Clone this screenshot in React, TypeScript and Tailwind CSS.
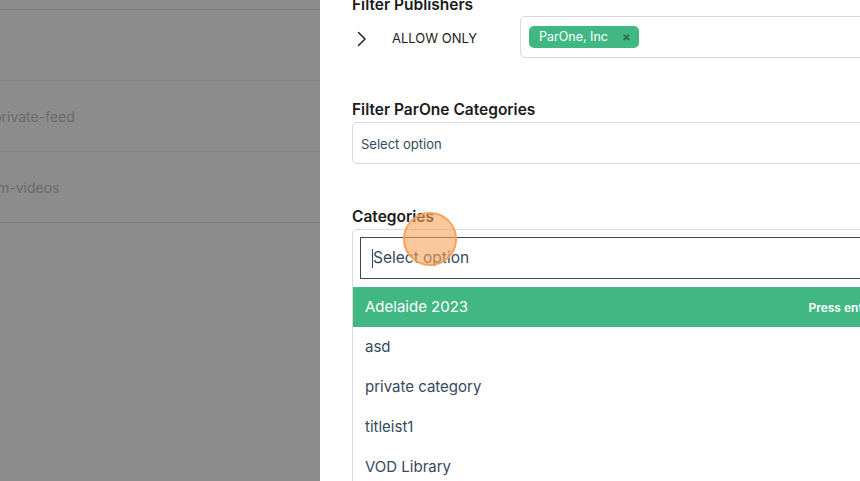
import React from 'react';

const options = ['asd', 'private category', 'titleist1', 'VOD Library'];

const BackgroundList: React.FC = () => (
  <div className="w-[320px] shrink-0 overflow-hidden bg-[#8c8c8c] text-[14px] text-[#6a6a6a]">
    <div className="h-[10px] border-b border-[#818181]" />
    <div className="h-[71px] border-b border-[#818181]" />
    <div className="flex h-[71px] items-center border-b border-[#818181]">
      <span className="-ml-[7px] whitespace-nowrap">private-feed</span>
    </div>
    <div className="flex h-[71px] items-center border-b border-[#818181]">
      <span className="-ml-[3px] whitespace-nowrap">m-videos</span>
    </div>
  </div>
);

const App: React.FC = () => {
  return (
    <div className="flex h-[481px] w-[860px] overflow-hidden font-['Inter',sans-serif]">
      <BackgroundList />

      <div className="relative flex-1 overflow-hidden bg-white pl-8">
        <div className="w-[588px]">
          <h3 className="-mt-[5px] text-[15.5px] leading-5 font-semibold text-[#1b1b1b]">Filter Publishers</h3>

          <div className="mt-px flex items-center">
            <div className="mt-[3px] flex w-[168px] items-center">
              <svg width="10" height="16" viewBox="0 0 10 16" className="ml-[5px]" fill="none" stroke="#222" strokeWidth="1.5" strokeLinecap="round" strokeLinejoin="round">
                <polyline points="1.5,1.5 8,8 1.5,14.5" />
              </svg>
              <span className="ml-[25px] text-[13px] text-[#1b1b1b]">ALLOW ONLY</span>
            </div>
            <div className="flex h-[42px] flex-1 items-center rounded-[5px] border border-[#d9d9d9] pl-2">
              <span className="flex h-[22px] items-center gap-[14px] rounded-[5px] bg-[#41b883] pl-[10px] pr-[8px] text-[12.5px] text-white">
                ParOne, Inc
                <span className="text-[13px] font-bold leading-none text-[#266d4d]">×</span>
              </span>
            </div>
          </div>

          <h3 className="mt-[42px] text-[15.5px] leading-5 font-semibold text-[#1b1b1b]">Filter ParOne Categories</h3>
          <div className="mt-[2px] flex h-[42px] items-center rounded-[5px] border border-[#d9d9d9] pl-2 pt-[3px] text-[13px] text-[#35495e]">
            Select option
          </div>

          <h3 className="mt-[43px] text-[15.5px] leading-5 font-semibold text-[#1b1b1b]">Categories</h3>
          <div className="mt-[2px] rounded-t-[5px] border border-[#d9d9d9]">
            <div className="px-[7px] pt-[7px] pb-2">
              <div className="flex h-[42px] items-center border border-[#35495e] pl-[11px] text-[15.5px] text-[#35495e]">
                <span className="h-[19px] w-px bg-[#35495e]" />
                Select option
              </div>
            </div>
            <ul className="text-[15px] text-[#35495e]">
              <li className="flex h-[40px] items-center justify-between bg-[#41b883] px-3 pt-px text-white">
                <span>Adelaide 2023</span>
                <span className="text-[12px] font-semibold">Press enter to select</span>
              </li>
              {options.map((o) => (
                <li key={o} className="flex h-[40px] items-center px-3 pt-px">
                  {o}
                </li>
              ))}
            </ul>
          </div>
        </div>

        {/* click highlight */}
        <div className="pointer-events-none absolute left-[83px] top-[212px] h-[54px] w-[54px] rounded-full border-2 border-[#f6a25c] bg-[#f9a35b]/60" />
      </div>
    </div>
  );
};

export default App;
